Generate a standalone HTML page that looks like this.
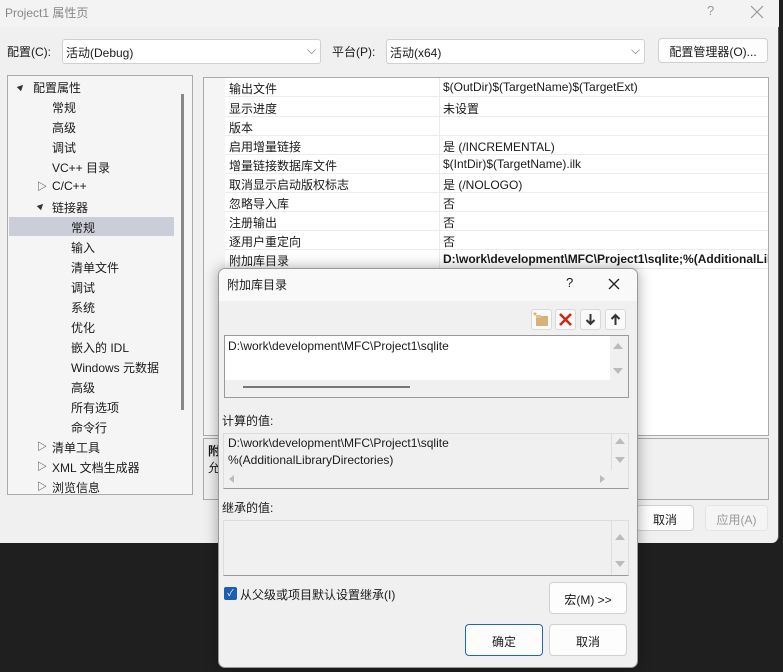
<!DOCTYPE html>
<html><head><meta charset="utf-8"><style>
*{box-sizing:border-box;margin:0;padding:0}
body{width:783px;height:672px;background:#1f1f1f;position:relative;overflow:hidden;font-family:"Liberation Sans","Noto Sans CJK SC",sans-serif;font-size:12px;color:#1a1a1a}
.a{position:absolute;white-space:nowrap}
.win{position:absolute;left:0;top:0;width:779px;height:543px;background:#f0f0f0;border-radius:0 0 7px 0;border-right:1px solid #555}
.btn{position:absolute;background:#fdfdfd;border:1px solid #d0d0d0;border-radius:4px;text-align:center;font-size:12px;white-space:nowrap}
.row{position:absolute;left:225px;width:543px;height:19px;border-bottom:1px solid #ececec;background:#fff;white-space:nowrap}
.row span{position:absolute;top:2px;white-space:nowrap}
.tri{position:absolute;width:0;height:0}
.tb{position:absolute;top:309px;width:21px;height:21px;background:#fafafa;border:1px solid #d8d8d8;border-radius:3px}
.up{border-left:5px solid transparent;border-right:5px solid transparent;border-bottom:6px solid #bbb}
.dn{border-left:5px solid transparent;border-right:5px solid transparent;border-top:6px solid #bbb}
</style></head><body>
<div class="win">
<div class="a" style="left:0;top:0;width:779px;height:27px;background:#f3f3f3"></div>
<div class="a" style="left:5px;top:4px;color:#888;font-size:12px">Project1 属性页</div>
<div class="a" style="left:707px;top:3px;color:#999;font-size:13px">?</div>
<svg class="a" style="left:750px;top:5px" width="14" height="14"><path d="M1 1L13 13M13 1L1 13" stroke="#999" stroke-width="1.2"/></svg>
<div class="a" style="left:7px;top:43px">配置(C):</div>
<div class="a" style="left:62px;top:39px;width:259px;height:25px;background:#fff;border:1px solid #d0d0d0;border-radius:3px"><span class="a" style="left:3px;top:4px">活动(Debug)</span><span class="a" style="left:244px;top:3px;color:#666">⌵</span></div>
<div class="a" style="left:332px;top:43px">平台(P):</div>
<div class="a" style="left:386px;top:39px;width:259px;height:25px;background:#fff;border:1px solid #d0d0d0;border-radius:3px"><span class="a" style="left:3px;top:4px">活动(x64)</span><span class="a" style="left:244px;top:3px;color:#666">⌵</span></div>
<div class="btn" style="left:658px;top:38px;width:110px;height:25px;padding-top:4px">配置管理器(O)...</div>
<!-- tree -->
<div class="a" style="left:7px;top:75px;width:186px;height:420px;background:#f5f5f5;border:1px solid #aaa"></div>
<div class="a" style="left:181px;top:94px;width:3px;height:316px;background:#888"></div>
<div class="a" style="left:9px;top:217px;width:165px;height:19px;background:#cbcdd9"></div>
<div class="tri" style="left:18px;top:84px;border-left:3px solid transparent;border-right:3px solid transparent;border-bottom:6px solid #333;transform:rotate(45deg)"></div>
<div class="a" style="left:33px;top:79px">配置属性</div>
<div class="a" style="left:52px;top:99px">常规</div>
<div class="a" style="left:52px;top:119px">高级</div>
<div class="a" style="left:52px;top:139px">调试</div>
<div class="a" style="left:52px;top:159px">VC++ 目录</div>
<div class="a" style="left:37px;top:178px;font-size:10px">▷</div><div class="a" style="left:52px;top:179px">C/C++</div>
<div class="tri" style="left:38px;top:203px;border-left:3px solid transparent;border-right:3px solid transparent;border-bottom:6px solid #333;transform:rotate(45deg)"></div>
<div class="a" style="left:52px;top:199px">链接器</div>
<div class="a" style="left:71px;top:219px">常规</div>
<div class="a" style="left:71px;top:239px">输入</div>
<div class="a" style="left:71px;top:259px">清单文件</div>
<div class="a" style="left:71px;top:279px">调试</div>
<div class="a" style="left:71px;top:299px">系统</div>
<div class="a" style="left:71px;top:319px">优化</div>
<div class="a" style="left:71px;top:339px">嵌入的 IDL</div>
<div class="a" style="left:71px;top:359px">Windows 元数据</div>
<div class="a" style="left:71px;top:379px">高级</div>
<div class="a" style="left:71px;top:399px">所有选项</div>
<div class="a" style="left:71px;top:419px">命令行</div>
<div class="a" style="left:37px;top:438px;font-size:10px">▷</div><div class="a" style="left:52px;top:439px">清单工具</div>
<div class="a" style="left:37px;top:458px;font-size:10px">▷</div><div class="a" style="left:52px;top:459px">XML 文档生成器</div>
<div class="a" style="left:37px;top:478px;font-size:10px">▷</div><div class="a" style="left:52px;top:479px">浏览信息</div>
<!-- grid -->
<div class="a" style="left:203px;top:77px;width:566px;height:359px;background:#fff;border:1px solid #aaa"></div>
<div class="a" style="left:204px;top:78px;width:21px;height:357px;background:#f5f5f5"></div>
<div class="row" style="top:78px"><span style="left:4px">输出文件</span><span style="left:218px">$(OutDir)$(TargetName)$(TargetExt)</span></div>
<div class="row" style="top:98px"><span style="left:4px">显示进度</span><span style="left:218px">未设置</span></div>
<div class="row" style="top:117px"><span style="left:4px">版本</span></div>
<div class="row" style="top:136px"><span style="left:4px">启用增量链接</span><span style="left:218px">是 (/INCREMENTAL)</span></div>
<div class="row" style="top:155px"><span style="left:4px">增量链接数据库文件</span><span style="left:218px">$(IntDir)$(TargetName).ilk</span></div>
<div class="row" style="top:174px"><span style="left:4px">取消显示启动版权标志</span><span style="left:218px">是 (/NOLOGO)</span></div>
<div class="row" style="top:193px"><span style="left:4px">忽略导入库</span><span style="left:218px">否</span></div>
<div class="row" style="top:212px"><span style="left:4px">注册输出</span><span style="left:218px">否</span></div>
<div class="row" style="top:231px"><span style="left:4px">逐用户重定向</span><span style="left:218px">否</span></div>
<div class="row" style="top:250px;overflow:hidden"><span style="left:4px">附加库目录</span><span style="left:218px;font-weight:bold">D:\work\development\MFC\Project1\sqlite;%(AdditionalLibraryDirectories)</span></div>
<div class="a" style="left:439px;top:78px;width:1px;height:192px;background:#ececec"></div>
<div class="a" style="left:203px;top:438px;width:566px;height:62px;background:#f0f0f0;border:1px solid #aaa"></div>
<div class="a" style="left:208px;top:442px;font-weight:bold">附</div>
<div class="a" style="left:208px;top:459px">允</div>
<div class="btn" style="left:636px;top:505px;width:58px;height:26px;padding-top:5px">取消</div>
<div class="btn" style="left:705px;top:505px;width:63px;height:26px;padding-top:5px;color:#999;background:#f5f5f5;border-color:#e4e4e4">应用(A)</div>
</div>
<!-- dialog -->
<div class="a" style="left:218px;top:268px;width:420px;height:400px;background:#f0f0f0;border:1px solid #999;border-radius:7px;overflow:hidden;box-shadow:0 0 14px rgba(0,0,0,.35)">
<div class="a" style="left:0;top:0;width:420px;height:32px;background:#f9f9f9"></div>
</div>
<div class="a" style="left:227px;top:276px">附加库目录</div>
<div class="a" style="left:566px;top:275px;font-size:13px">?</div>
<svg class="a" style="left:608px;top:278px" width="12" height="12"><path d="M1 1L11 11M11 1L1 11" stroke="#222" stroke-width="1.3"/></svg>
<div class="tb" style="left:531px"><svg width="19" height="19"><rect x="4" y="6" width="12" height="10" fill="#d9b07a"/><rect x="4" y="5" width="5" height="3" fill="#e3c08c"/><text x="1" y="9" font-size="10" fill="#e38b00" font-family="Liberation Sans">*</text></svg></div>
<div class="tb" style="left:555px"><svg width="19" height="19"><path d="M4 4L15 15M15 4L4 15" stroke="#c42b1c" stroke-width="2.6"/></svg></div>
<div class="tb" style="left:580px"><svg width="19" height="19"><path d="M9.5 4V14M5.5 10L9.5 14L13.5 10" stroke="#333" stroke-width="2" fill="none"/></svg></div>
<div class="tb" style="left:605px"><svg width="19" height="19"><path d="M9.5 15V5M5.5 9L9.5 5L13.5 9" stroke="#333" stroke-width="2" fill="none"/></svg></div>
<div class="a" style="left:224px;top:335px;width:405px;height:63px;background:#f0f0f0;border:1px solid #999"></div>
<div class="a" style="left:225px;top:336px;width:385px;height:44px;background:#fff"></div>
<div class="a" style="left:228px;top:339px">D:\work\development\MFC\Project1\sqlite</div>
<div class="tri up" style="left:613px;top:343px"></div><div class="tri dn" style="left:613px;top:368px"></div>
<div class="a" style="left:243px;top:386px;width:167px;height:2px;background:#777"></div>
<div class="a" style="left:222px;top:412px">计算的值:</div>
<div class="a" style="left:223px;top:433px;width:406px;height:56px;background:#f0f0f0;border:1px solid #ddd;border-bottom:1px solid #999"></div>
<div class="a" style="left:228px;top:436px">D:\work\development\MFC\Project1\sqlite</div>
<div class="a" style="left:228px;top:453px">%(AdditionalLibraryDirectories)</div>
<div class="a" style="left:611px;top:433px;width:1px;height:37px;background:#ddd"></div>
<div class="tri up" style="left:615px;top:438px"></div><div class="tri dn" style="left:615px;top:457px"></div>
<div class="a" style="left:229px;top:475px;width:0;height:0;border-top:4px solid transparent;border-bottom:4px solid transparent;border-right:5px solid #bbb"></div>
<div class="a" style="left:600px;top:475px;width:0;height:0;border-top:4px solid transparent;border-bottom:4px solid transparent;border-left:5px solid #bbb"></div>
<div class="a" style="left:222px;top:499px">继承的值:</div>
<div class="a" style="left:223px;top:520px;width:406px;height:56px;background:#f0f0f0;border:1px solid #ddd;border-bottom:1px solid #999"></div>
<div class="a" style="left:611px;top:520px;width:1px;height:55px;background:#ddd"></div>
<div class="tri up" style="left:615px;top:534px"></div><div class="tri dn" style="left:615px;top:561px"></div>
<div class="a" style="left:224px;top:587px;width:13px;height:13px;background:#1a5fb4;border-radius:2px;color:#fff;font-size:9px;text-align:center;line-height:13px">✓</div>
<div class="a" style="left:240px;top:586px">从父级或项目默认设置继承(I)</div>
<div class="btn" style="left:549px;top:582px;width:78px;height:32px;padding-top:8px">宏(M) &gt;&gt;</div>
<div class="btn" style="left:465px;top:624px;width:78px;height:32px;padding-top:8px;border-color:#1a66c2">确定</div>
<div class="btn" style="left:549px;top:624px;width:78px;height:32px;padding-top:8px">取消</div>
</body></html>
